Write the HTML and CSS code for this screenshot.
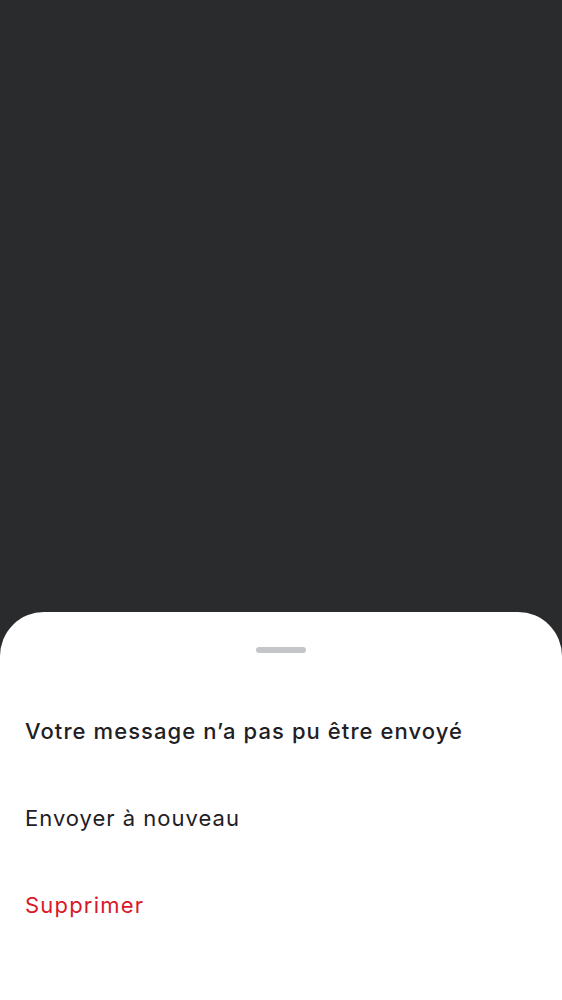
FILE: index.html
```html
<!DOCTYPE html>
<html lang="fr">
<head>
<meta charset="utf-8">
<link rel="stylesheet" href="styles.css">
</head>
<body>
<div class="screen">
  <div class="backdrop"></div>
  <div class="sheet">
    <div class="handle"></div>
    <ul class="menu">
      <li class="item title">Votre message n’a pas pu être envoyé</li>
      <li class="item">Envoyer à nouveau</li>
      <li class="item danger">Supprimer</li>
    </ul>
  </div>
</div>
</body>
</html>
```

FILE: styles.css
```css
html, body {
  margin: 0;
  padding: 0;
  background: #2a2b2d;
}
.screen {
  width: 562px;
  height: 1000px;
  display: flex;
  flex-direction: column;
  font-family: Inter, Roboto, sans-serif;
}
.backdrop {
  flex: 1;
  background: #2a2b2d;
}
.sheet {
  height: 388px;
  background: #ffffff;
  border-radius: 44px 44px 0 0;
  padding-top: 35px;
  box-sizing: border-box;
  display: flex;
  flex-direction: column;
}
.handle {
  width: 50px;
  height: 6px;
  border-radius: 3px;
  background: #c3c5c9;
  align-self: center;
}
.menu {
  list-style: none;
  margin: 35px 0 0;
  padding: 0;
}
.item {
  height: 87px;
  line-height: 87px;
  padding: 0 25px;
  font-size: 22px;
  letter-spacing: 1px;
  color: #1f2024;
  white-space: nowrap;
}
.title {
  font-weight: 500;
  letter-spacing: 1.08px;
}
.danger {
  color: #d9182a;
  letter-spacing: 1.2px;
}
```
